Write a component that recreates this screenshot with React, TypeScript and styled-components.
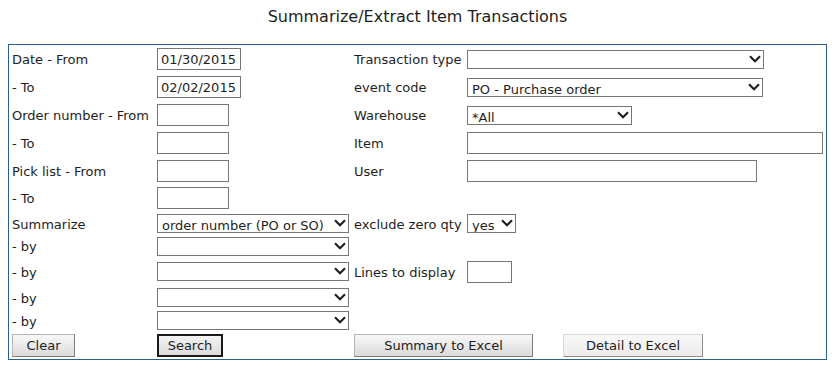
import React from "react";
import styled, { createGlobalStyle, css } from "styled-components";

const Global = createGlobalStyle`
  html, body { margin: 0; padding: 0; background: #ffffff; }
  body { font-family: "DejaVu Sans", Verdana, sans-serif; color: #1e1e1e; }
  * { box-sizing: border-box; }
`;

const Page = styled.div`
  padding: 0 8px;
  width: 835px;
`;

const Title = styled.h1`
  margin: 0;
  width: 819px;
  height: 44px;
  padding-top: 7px;
  font-size: 16px;
  line-height: 19px;
  font-weight: normal;
  text-align: center;
  color: #1e1e1e;
`;

const Panel = styled.form`
  width: 819px;
  border: 1px solid #2a6090;
  padding: 0 2px 1px 3px;
  display: grid;
  grid-template-columns: 145px 197px 113px 356px;
  grid-template-rows: 28px 28px 28px 28px 28px 26px 25px 20px 31px 21px 25px 25px;
  align-items: center;
  font-size: 13px;
`;

const Label = styled.span`
  font-size: 13px;
  line-height: 16px;
  padding-top: 2px;
  white-space: nowrap;
  color: #1e1e1e;
`;

const Empty = styled.span``;

const TextInput = styled.input<{ $w: number }>`
  width: ${(p) => p.$w}px;
  height: 22px;
  border: 1px solid #767676;
  padding: 1px 0 0 3px;
  font-family: "DejaVu Sans", Verdana, sans-serif;
  font-size: 13px;
  color: #1e1e1e;
  background: #fff;
  outline: none;
`;

const SelectWrap = styled.span<{ $w: number }>`
  position: relative;
  display: block;
  width: ${(p) => p.$w}px;
  height: 19px;
`;

const Select = styled.select`
  appearance: none;
  -webkit-appearance: none;
  display: block;
  width: 100%;
  height: 19px;
  border: 1px solid #767676;
  border-radius: 0;
  background: #fff;
  padding: 3px 18px 0 4px;
  font-family: "DejaVu Sans", Verdana, sans-serif;
  font-size: 13px;
  line-height: 15px;
  color: #1e1e1e;
  outline: none;
`;

const Chevron = styled.svg`
  position: absolute;
  right: 3px;
  top: 5px;
  width: 12px;
  height: 8px;
  pointer-events: none;
`;

const ButtonRow = styled.div`
  grid-column: 3 / span 2;
  display: flex;
  gap: 30px;
`;

const Button = styled.button<{ $w: number; $variant?: "default" | "flat" | "primary" }>`
  width: ${(p) => p.$w}px;
  height: 23px;
  font-family: "DejaVu Sans", Verdana, sans-serif;
  font-size: 13px;
  color: #1e1e1e;
  padding: 0;
  border-radius: 0;
  cursor: pointer;
  ${(p) =>
    p.$variant === "primary"
      ? css`
          border: 2px solid #1a1a1a;
          background: linear-gradient(#f2f2f2, #dcdcdc);
        `
      : p.$variant === "flat"
      ? css`
          border: 1px solid #d8d8d8;
          border-right-color: #8a8a8a;
          border-bottom-color: #8a8a8a;
          background: linear-gradient(#f7f7f7, #ececec);
        `
      : css`
          border: 1px solid #b4b4b4;
          border-right-color: #7c7c7c;
          border-bottom-color: #7c7c7c;
          background: linear-gradient(#f8f8f8, #dadada);
        `}
`;

const ChevronIcon = () => (
  <Chevron viewBox="0 0 12 8">
    <polyline points="1,1.2 6,6.2 11,1.2" fill="none" stroke="#202020" strokeWidth="2.2" />
  </Chevron>
);

const Dropdown = ({ w, value }: { w: number; value?: string }) => (
  <SelectWrap $w={w}>
    <Select defaultValue={value ?? ""}>
      <option value={value ?? ""}>{value ?? ""}</option>
    </Select>
    <ChevronIcon />
  </SelectWrap>
);

export default function App() {
  return (
    <Page>
      <Global />
      <Title>Summarize/Extract Item Transactions</Title>
      <Panel onSubmit={(e) => e.preventDefault()}>
        <Label>Date - From</Label>
        <TextInput $w={84} defaultValue="01/30/2015" />
        <Label>Transaction type</Label>
        <Dropdown w={297} />

        <Label>- To</Label>
        <TextInput $w={84} defaultValue="02/02/2015" />
        <Label>event code</Label>
        <Dropdown w={296} value="PO - Purchase order" />

        <Label>Order number - From</Label>
        <TextInput $w={72} />
        <Label>Warehouse</Label>
        <Dropdown w={165} value="*All" />

        <Label>- To</Label>
        <TextInput $w={72} />
        <Label>Item</Label>
        <TextInput $w={356} />

        <Label>Pick list - From</Label>
        <TextInput $w={72} />
        <Label>User</Label>
        <TextInput $w={290} />

        <Label>- To</Label>
        <TextInput $w={72} />
        <Empty />
        <Empty />

        <Label>Summarize</Label>
        <Dropdown w={192} value="order number (PO or SO)" />
        <Label>exclude zero qty</Label>
        <Dropdown w={49} value="yes" />

        <Label>- by</Label>
        <Dropdown w={192} />
        <Empty />
        <Empty />

        <Label>- by</Label>
        <Dropdown w={192} />
        <Label>Lines to display</Label>
        <TextInput $w={45} />

        <Label>- by</Label>
        <Dropdown w={192} />
        <Empty />
        <Empty />

        <Label>- by</Label>
        <Dropdown w={192} />
        <Empty />
        <Empty />

        <Button type="button" $w={63}>Clear</Button>
        <Button type="submit" $w={66} $variant="primary">Search</Button>
        <ButtonRow>
          <Button type="button" $w={179}>Summary to Excel</Button>
          <Button type="button" $w={140} $variant="flat">Detail to Excel</Button>
        </ButtonRow>
      </Panel>
    </Page>
  );
}
